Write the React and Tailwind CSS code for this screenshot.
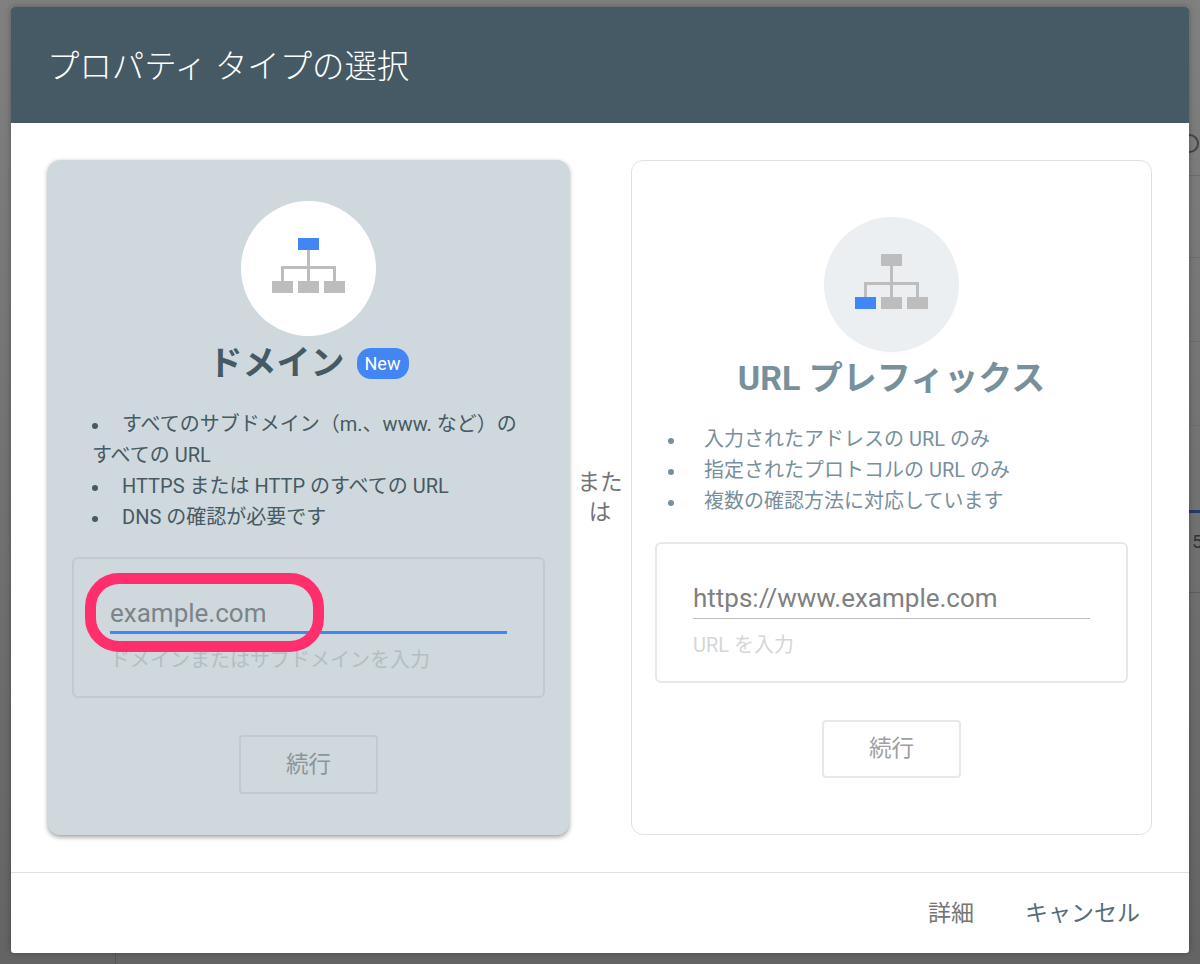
import React from 'react';

const FONT = 'font-[Roboto,"Noto_Sans_CJK_JP",sans-serif]';

function SiteIcon({ blue }) {
  return (
    <svg width="73" height="55" viewBox="0 0 73 55">
      <path d="M36.5 12V43M10.5 43V29.5H62.5V43" fill="none" stroke="#bdbdbd" strokeWidth="3" />
      <rect x="26" y="0" width="21" height="12" fill={blue === 'top' ? '#4285f4' : '#bdbdbd'} />
      <rect x="0" y="43" width="21" height="12" fill={blue === 'left' ? '#4285f4' : '#bdbdbd'} />
      <rect x="26" y="43" width="21" height="12" fill="#bdbdbd" />
      <rect x="52" y="43" width="21" height="12" fill="#bdbdbd" />
    </svg>
  );
}

function DomainCard() {
  const items = ['すべてのサブドメイン（m.、www. など）のすべての URL', 'HTTPS または HTTP のすべての URL', 'DNS の確認が必要です'];
  return (
    <div className="w-[521px] h-[675px] flex flex-col items-center bg-[#cfd8dc] rounded-[12px] pt-[41px] shadow-[0_2px_5px_rgba(0,0,0,0.4)]">
      <div className="w-[135px] h-[135px] shrink-0 rounded-full bg-white flex items-center justify-center pb-[7px]">
        <SiteIcon blue="top" />
      </div>
      <div className="h-[52px] pt-[2px] flex items-center gap-[12px] text-[#455a64]">
        <span className="text-[34px] font-bold">ドメイン</span>
        <span className="w-[52px] h-[31px] rounded-[14px] bg-[#4285f4] text-white text-[18px] flex items-center justify-center">New</span>
      </div>
      <ul className="self-stretch mt-[21px] pl-[44px] pr-[40px] text-[20px] leading-[31px] text-[#455a64]">
        {items.map(t => (
          <li key={t}>
            <span className="inline-block w-[6px] h-[6px] rounded-full align-middle mr-[24px] bg-[#455a64]" />
            {t}
          </li>
        ))}
      </ul>
      <div className="relative w-[473px] h-[141px] mt-[24px] border-2 border-[#c0cacf] rounded-[6px] pl-[36px]">
        <div className="mt-[36px] w-[397px] h-[39px] border-b-[3px] border-[#4285f4] text-[26px] leading-[36px] text-[#7b8488]">example.com</div>
        <div className="mt-[13px] text-[20px] leading-[26px] text-[#b3bec2]">ドメインまたはサブドメインを入力</div>
        <div className="absolute left-[11px] top-[14px] w-[239px] h-[79px] border-[11px] border-[#ff2e6c] rounded-[34px]" />
      </div>
      <div className="w-[139px] h-[59px] mt-[37px] border-2 border-[#c0cacf] rounded-[4px] flex items-center justify-center text-[22.5px] text-[#8b9599]">続行</div>
    </div>
  );
}

function PrefixCard() {
  const items = ['入力されたアドレスの URL のみ', '指定されたプロトコルの URL のみ', '複数の確認方法に対応しています'];
  return (
    <div className="w-[521px] h-[675px] flex flex-col items-center bg-white border border-[#e0e0e0] rounded-[12px] pt-[56px]">
      <div className="w-[135px] h-[135px] shrink-0 rounded-full bg-[#eceff1] flex items-center justify-center pb-[7px]">
        <SiteIcon blue="left" />
      </div>
      <div className="h-[52px] flex items-center text-[34px] font-bold text-[#78909c]">URL プレフィックス</div>
      <ul className="self-stretch mt-[20px] pl-[36px] text-[20px] leading-[31px] text-[#78909c]">
        {items.map(t => (
          <li key={t}>
            <span className="inline-block w-[6px] h-[6px] rounded-full align-middle mr-[30px] bg-[#78909c]" />
            {t}
          </li>
        ))}
      </ul>
      <div className="w-[473px] h-[141px] mt-[25px] border-2 border-[#e8e8e8] rounded-[6px] pl-[36px]">
        <div className="mt-[36px] w-[397px] h-[39px] border-b border-[#bdbdbd] text-[26px] leading-[36px] text-[#808080]">https://www.example.com</div>
        <div className="mt-[13px] text-[20px] leading-[26px] text-[#d6d6d6]">URL を入力</div>
      </div>
      <div className="w-[139px] h-[58px] mt-[37px] border-2 border-[#e8e8e8] rounded-[4px] flex items-center justify-center text-[22.5px] text-[#9e9e9e]">続行</div>
    </div>
  );
}

export default function App() {
  return (
    <div className={`relative w-[1200px] h-[964px] overflow-hidden pt-[7px] pl-[11px] bg-gradient-to-b from-[#808080] to-[#646464] ${FONT}`}>
      {/* page behind the dialog, only the edge shows */}
      <div className="absolute left-[1189px] top-[175px] w-[11px] h-px bg-[#6c6c6c]" />
      <div className="absolute left-[1189px] top-[257px] w-[11px] h-px bg-[#6c6c6c]" />
      <div className="absolute left-[1189px] top-[341px] w-[11px] h-px bg-[#6c6c6c]" />
      <div className="absolute left-[1189px] top-[425px] w-[11px] h-px bg-[#6c6c6c]" />
      <div className="absolute left-[1189px] top-[510px] w-[11px] h-[3px] bg-[#223a68]" />
      <div className="absolute left-[1192px] top-[530px] text-[19px] leading-[24px] text-[#333]">5</div>
      <div className="absolute left-[1180px] top-[134px] w-[19px] h-[19px] rounded-full border-2 border-[#444]" />
      <div className="absolute left-[1189px] top-[592px] w-[11px] h-px bg-[#5c5c5c]" />
      <div className="absolute left-[115px] top-[953px] w-px h-[11px] bg-[#555]" />

      <div className="relative w-[1178px] h-[946px] flex flex-col bg-white rounded-[3px] overflow-hidden shadow-[0_0_6px_rgba(0,0,0,0.3)]">
        <div className="h-[116px] shrink-0 bg-[#455a64] pl-[36px] pt-[5px] flex items-center text-[32.4px] text-white font-light">プロパティ タイプの選択</div>
        <div className="flex pl-[37px] pt-[37px]">
          <DomainCard />
          <div className="w-[62px] flex items-center justify-center">
            <div className="w-[46px] text-center text-[22.5px] leading-[30px] text-[#757575] mb-[1px]">または</div>
          </div>
          <PrefixCard />
        </div>
        <div className="mt-[37px] flex-1 border-t border-[#e0e0e0] flex items-center justify-end gap-[51px] pr-[49px] pt-[2px] text-[23px]">
          <span className="text-[#757575]">詳細</span>
          <span className="text-[#546e7a]">キャンセル</span>
        </div>
      </div>
    </div>
  );
}
